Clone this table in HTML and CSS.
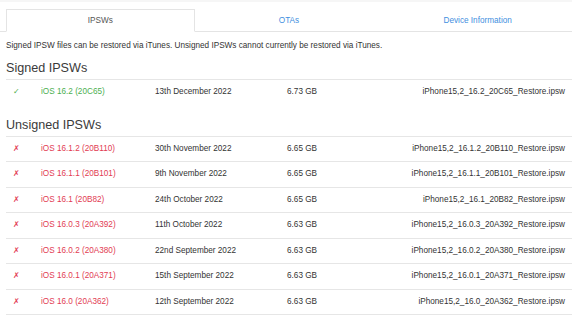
FILE: index.html
```html
<!DOCTYPE html>
<html lang="en">
<head>
    <meta charset="UTF-8">
    <meta name="viewport" content="width=device-width, initial-scale=1.0">
    <title>iPhone15,2 - IPSWs</title>
    <link rel="stylesheet" href="styles.css">
</head>
<body>
    <div class="page">
        <ul class="tabs">
            <li class="tab active">IPSWs</li>
            <li class="tab">OTAs</li>
            <li class="tab">Device Information</li>
        </ul>

        <p class="note">Signed IPSW files can be restored via iTunes. Unsigned IPSWs cannot currently be restored via iTunes.</p>

        <h3>Signed IPSWs</h3>
        <div class="fw-table">
            <div class="fw-row signed">
                <span class="mark">&#10003;</span>
                <span class="ver">iOS 16.2 (20C65)</span>
                <span>13th December 2022</span>
                <span>6.73 GB</span>
                <span class="file">iPhone15,2_16.2_20C65_Restore.ipsw</span>
            </div>
        </div>

        <h3 class="unsigned-title">Unsigned IPSWs</h3>
        <div class="fw-table last">
            <div class="fw-row unsigned">
                <span class="mark">&#10007;</span>
                <span class="ver">iOS 16.1.2 (20B110)</span>
                <span>30th November 2022</span>
                <span>6.65 GB</span>
                <span class="file">iPhone15,2_16.1.2_20B110_Restore.ipsw</span>
            </div>
            <div class="fw-row unsigned">
                <span class="mark">&#10007;</span>
                <span class="ver">iOS 16.1.1 (20B101)</span>
                <span>9th November 2022</span>
                <span>6.65 GB</span>
                <span class="file">iPhone15,2_16.1.1_20B101_Restore.ipsw</span>
            </div>
            <div class="fw-row unsigned">
                <span class="mark">&#10007;</span>
                <span class="ver">iOS 16.1 (20B82)</span>
                <span>24th October 2022</span>
                <span>6.65 GB</span>
                <span class="file">iPhone15,2_16.1_20B82_Restore.ipsw</span>
            </div>
            <div class="fw-row unsigned">
                <span class="mark">&#10007;</span>
                <span class="ver">iOS 16.0.3 (20A392)</span>
                <span>11th October 2022</span>
                <span>6.63 GB</span>
                <span class="file">iPhone15,2_16.0.3_20A392_Restore.ipsw</span>
            </div>
            <div class="fw-row unsigned">
                <span class="mark">&#10007;</span>
                <span class="ver">iOS 16.0.2 (20A380)</span>
                <span>22nd September 2022</span>
                <span>6.63 GB</span>
                <span class="file">iPhone15,2_16.0.2_20A380_Restore.ipsw</span>
            </div>
            <div class="fw-row unsigned">
                <span class="mark">&#10007;</span>
                <span class="ver">iOS 16.0.1 (20A371)</span>
                <span>15th September 2022</span>
                <span>6.63 GB</span>
                <span class="file">iPhone15,2_16.0.1_20A371_Restore.ipsw</span>
            </div>
            <div class="fw-row unsigned">
                <span class="mark">&#10007;</span>
                <span class="ver">iOS 16.0 (20A362)</span>
                <span>12th September 2022</span>
                <span>6.63 GB</span>
                <span class="file">iPhone15,2_16.0_20A362_Restore.ipsw</span>
            </div>
        </div>
    </div>
</body>
</html>
```

FILE: styles.css
```css
html, body {
    margin: 0;
    padding: 0;
    overflow: hidden;
}
body {
    font-family: "Liberation Sans", Arial, sans-serif;
    font-size: 8.2px;
    color: #333;
    background: #fff;
    border-top: 2px solid #f6f6f6;
}
.page {
    padding-left: 6px;
}
.tabs {
    display: flex;
    list-style: none;
    margin: 7px 0 0 -6px;
    padding: 0 0 0 6px;
    border-bottom: 1px solid #e4e4e4;
}
.tab {
    flex: 1;
    text-align: center;
    line-height: 12px;
    padding: 4.5px 0;
    margin-bottom: -1px;
    border: 1px solid transparent;
    color: #3f8fe0;
}
.tab.active {
    color: #555;
    background: #fff;
    border-color: #e4e4e4;
    border-bottom-color: #fff;
}
.note {
    margin: 8px 0 0;
    line-height: 12px;
}
h3 {
    font-size: 12.6px;
    font-weight: normal;
    color: #3a3a3a;
    line-height: 15px;
    margin: 9px 0 3px;
}
.unsigned-title {
    margin-top: 13px;
}
.fw-row {
    display: grid;
    grid-template-columns: 28px 114px 132px 1fr auto;
    border-top: 1px solid #e6e6e6;
}
.fw-row span {
    padding: 6.25px 0 6.25px 7px;
    line-height: 12px;
    white-space: nowrap;
}
.fw-row .file {
    padding-right: 7px;
    text-align: right;
}
.fw-table.last {
    border-bottom: 1px solid #e6e6e6;
}
.signed .mark, .signed .ver {
    color: #4caf50;
}
.unsigned .mark, .unsigned .ver {
    color: #e23b52;
}
```
